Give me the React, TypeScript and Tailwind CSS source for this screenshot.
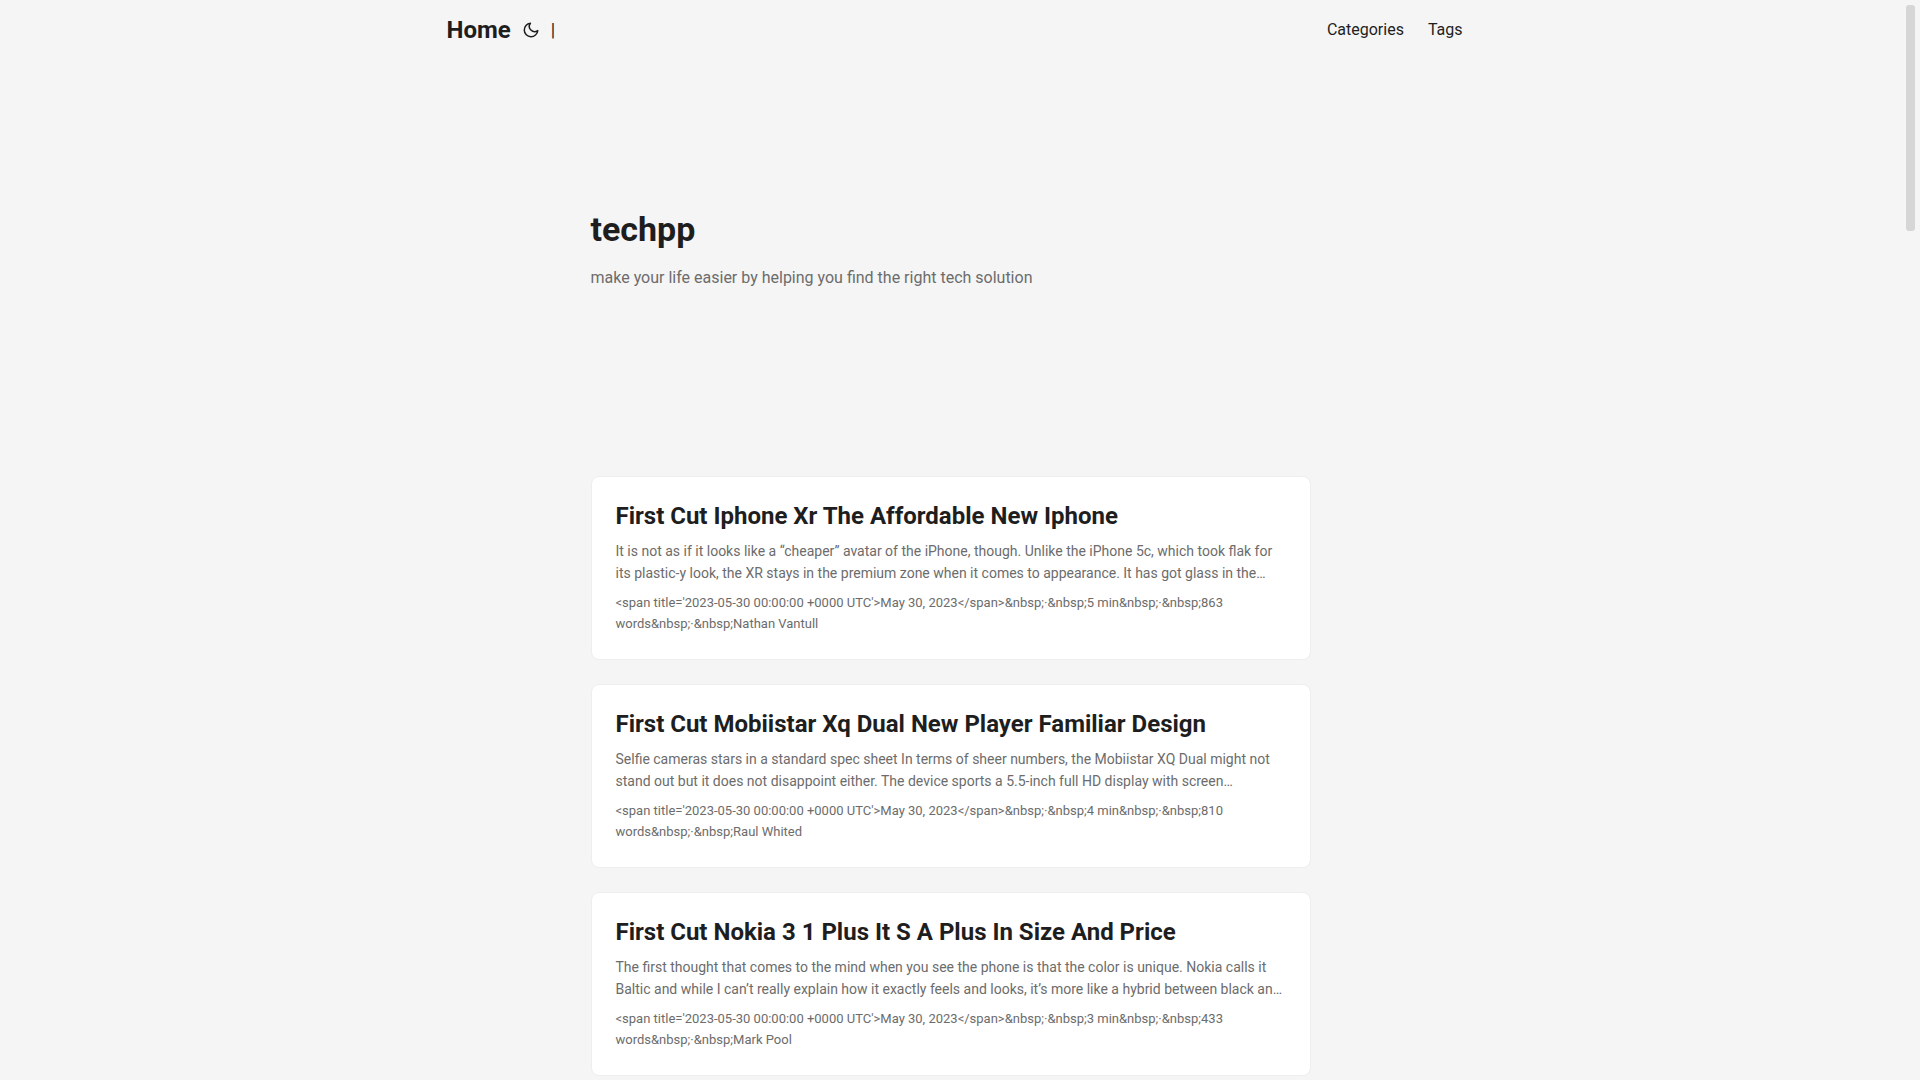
import React from "react";

type Post = {
  title: string;
  summary: string;
  minutes: number;
  words: number;
  author: string;
};

const posts: Post[] = [
  {
    title: "First Cut Iphone Xr The Affordable New Iphone",
    summary:
      "It is not as if it looks like a “cheaper” avatar of the iPhone, though. Unlike the iPhone 5c, which took flak for its plastic-y look, the XR stays in the premium zone when it comes to appearance. It has got glass in the…",
    minutes: 5,
    words: 863,
    author: "Nathan Vantull",
  },
  {
    title: "First Cut Mobiistar Xq Dual New Player Familiar Design",
    summary:
      "Selfie cameras stars in a standard spec sheet In terms of sheer numbers, the Mobiistar XQ Dual might not stand out but it does not disappoint either. The device sports a 5.5-inch full HD display with screen…",
    minutes: 4,
    words: 810,
    author: "Raul Whited",
  },
  {
    title: "First Cut Nokia 3 1 Plus It S A Plus In Size And Price",
    summary:
      "The first thought that comes to the mind when you see the phone is that the color is unique. Nokia calls it Baltic and while I can’t really explain how it exactly feels and looks, it’s more like a hybrid between black an…",
    minutes: 3,
    words: 433,
    author: "Mark Pool",
  },
];

function Header() {
  return (
    <header>
      <nav className="mx-auto flex h-[60px] max-w-[1072px] items-center justify-between pl-8 pr-6">
        <div className="flex items-center gap-[11px]">
          <a href="#" className="text-2xl font-bold">
            Home
          </a>
          <button type="button" aria-label="Toggle theme" className="cursor-pointer">
            <svg
              width="18"
              height="18"
              viewBox="0 0 24 24"
              fill="none"
              stroke="currentColor"
              strokeWidth="2"
              strokeLinecap="round"
              strokeLinejoin="round"
            >
              <path d="M21 12.79A9 9 0 1 1 11.21 3 7 7 0 0 0 21 12.79z" />
            </svg>
          </button>
          <span className="text-lg">|</span>
        </div>
        <ul className="flex gap-6 text-base">
          <li>
            <a href="#categories">Categories</a>
          </li>
          <li>
            <a href="#tags">Tags</a>
          </li>
        </ul>
      </nav>
    </header>
  );
}

function PostCard({ post }: { post: Post }) {
  return (
    <article className="mb-6 rounded-lg border border-[#eeeeee] bg-white px-6 pt-6 pb-[25px]">
      <h2 className="text-2xl leading-[31px] font-bold">
        <a href="#post">{post.title}</a>
      </h2>
      <p className="my-2 text-sm leading-[22px] text-[#6c6c6c]">{post.summary}</p>
      <footer className="text-[13px] leading-[21px] text-[#6c6c6c]">
        {`<span title='2023-05-30 00:00:00 +0000 UTC'>May 30, 2023</span>&nbsp;·&nbsp;${post.minutes} min&nbsp;·&nbsp;${post.words} words&nbsp;·&nbsp;${post.author}`}
      </footer>
    </article>
  );
}

export default function App() {
  return (
    <div className="flex h-screen bg-[#f5f5f5] font-['Roboto',sans-serif] text-[#1e1e1e]">
      <div className="min-w-0 flex-1 overflow-hidden">
        <Header />
        <main className="mx-auto max-w-[768px] px-6">
          <section className="pt-[147px] pb-[185px]">
            <h1 className="text-[34px] leading-11 font-bold">techpp</h1>
            <p className="mt-3.5 text-base leading-[26px] text-[#6c6c6c]">
              make your life easier by helping you find the right tech solution
            </p>
          </section>
          {posts.map((post) => (
            <PostCard key={post.title} post={post} />
          ))}
        </main>
      </div>
      <div aria-hidden="true" className="w-[19px] p-[5px]">
        <div className="h-[226px] rounded-[3px] bg-[#d6d6d6]" />
      </div>
    </div>
  );
}
